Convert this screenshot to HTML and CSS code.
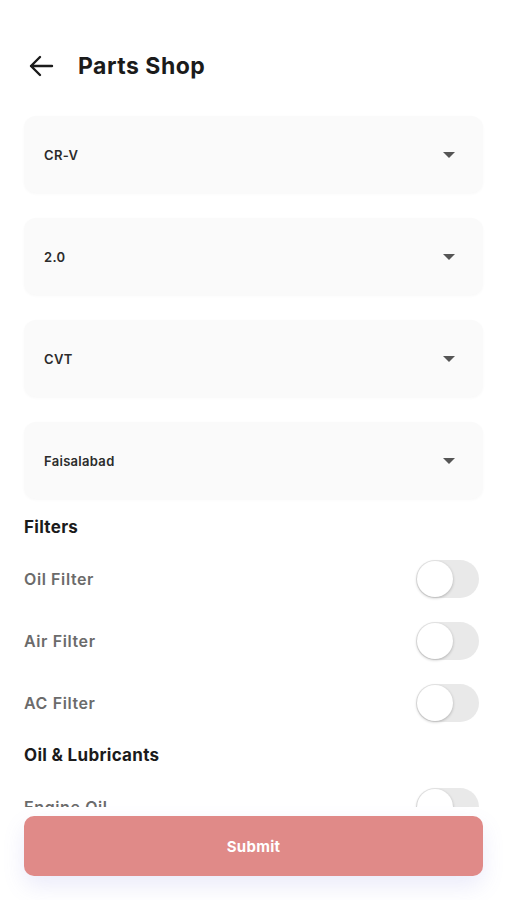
FILE: index.html
```html
<!DOCTYPE html>
<html lang="en">
<head>
  <meta charset="UTF-8" />
  <title>Parts Shop</title>
  <link rel="stylesheet" href="styles.css">
</head>
<body>
  <div class="page">

    <header class="header">
      <svg class="back" width="26" height="22" viewBox="0 0 26 22">
        <path d="M24 11H3M12 2L3 11l9 9" fill="none" stroke="#1b1b1b" stroke-width="2.4" stroke-linecap="round" stroke-linejoin="round"/>
      </svg>
      <h1>Parts Shop</h1>
    </header>

    <main class="scroll">
      <div class="select"><span>CR-V</span><i class="caret"></i></div>
      <div class="select"><span>2.0</span><i class="caret"></i></div>
      <div class="select"><span>CVT</span><i class="caret"></i></div>
      <div class="select"><span>Faisalabad</span><i class="caret"></i></div>

      <h2>Filters</h2>
      <div class="row"><span>Oil Filter</span><div class="toggle"><div class="knob"></div></div></div>
      <div class="row"><span>Air Filter</span><div class="toggle"><div class="knob"></div></div></div>
      <div class="row"><span>AC Filter</span><div class="toggle"><div class="knob"></div></div></div>

      <h2>Oil &amp; Lubricants</h2>
      <div class="row"><span>Engine Oil</span><div class="toggle"><div class="knob"></div></div></div>
    </main>

    <footer class="footer">
      <button class="submit">Submit</button>
    </footer>

  </div>
</body>
</html>
```

FILE: styles.css
```css
body {
  margin: 0;
  background: #fff;
  font-family: "Inter", "Liberation Sans", sans-serif;
  color: #1b1b1b;
}

.page {
  height: 900px;
  display: flex;
  flex-direction: column;
}

.header {
  display: flex;
  align-items: center;
  height: 32px;
  padding: 50px 24px 0 28px;
}

.back {
  margin-right: 24px;
}

h1 {
  margin: 0;
  font-size: 23px;
  font-weight: 700;
  letter-spacing: 0.5px;
}

.scroll {
  flex: 1;
  overflow: hidden;
  padding: 34px 24px 0;
}

.select {
  display: flex;
  align-items: center;
  justify-content: space-between;
  height: 77px;
  margin-bottom: 25px;
  padding: 0 28px 0 20px;
  background: #fafafa;
  border-radius: 12px;
  box-shadow: 0 1px 3px rgba(0, 0, 0, 0.03);
  font-size: 13px;
  font-weight: 600;
  letter-spacing: 0.3px;
  color: #2b2b2b;
}

.select:nth-of-type(4) {
  margin-bottom: 16px;
}

.caret {
  width: 0;
  height: 0;
  border-left: 6px solid transparent;
  border-right: 6px solid transparent;
  border-top: 6px solid #555;
}

h2 {
  margin: 0 0 9px;
  font-size: 17px;
  line-height: 24px;
  font-weight: 700;
  letter-spacing: 0.3px;
  color: #1b1b1b;
}

.row {
  display: flex;
  align-items: center;
  justify-content: space-between;
  height: 62px;
  padding-right: 4px;
  font-size: 16px;
  font-weight: 600;
  letter-spacing: 0.6px;
  color: #6b6b6b;
}

.row + h2 {
  margin-top: 9px;
}

.toggle {
  width: 63px;
  height: 38px;
  border-radius: 19px;
  background: #e9e9e9;
  display: flex;
  align-items: center;
  padding-left: 1px;
  box-sizing: border-box;
}

.knob {
  width: 36px;
  height: 36px;
  border-radius: 50%;
  background: #fff;
  box-shadow: 0 1px 3px rgba(0, 0, 0, 0.25);
}

.footer {
  padding: 9px 24px 24px;
}

.submit {
  display: block;
  width: 100%;
  height: 60px;
  border: none;
  border-radius: 10px;
  background: #e08a88;
  color: #fff;
  font-family: inherit;
  font-size: 15px;
  font-weight: 700;
  letter-spacing: 0.3px;
  box-shadow: 0 10px 22px rgba(110, 110, 220, 0.14);
}
```
